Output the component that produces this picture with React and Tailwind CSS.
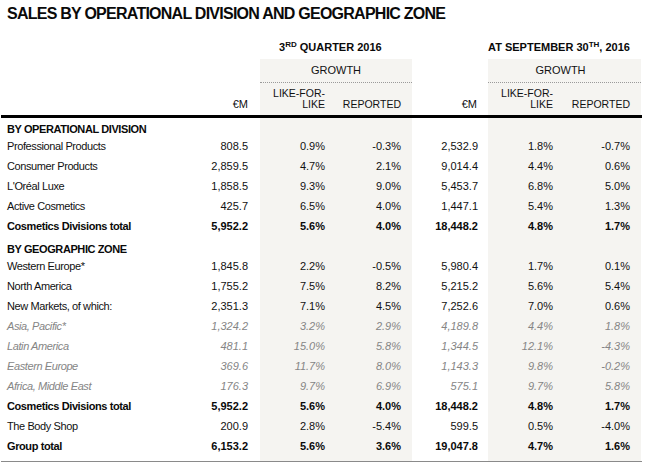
import React from "react";

const SH = "bg-[#f5f4f1]";

const rows = [
  { type: "section", label: "BY OPERATIONAL DIVISION", h: "h-[18px]" },
  { label: "Professional Products", v: ["808.5", "0.9%", "-0.3%", "2,532.9", "1.8%", "-0.7%"] },
  { label: "Consumer Products", v: ["2,859.5", "4.7%", "2.1%", "9,014.4", "4.4%", "0.6%"] },
  { label: "L'Oréal Luxe", v: ["1,858.5", "9.3%", "9.0%", "5,453.7", "6.8%", "5.0%"] },
  { label: "Active Cosmetics", v: ["425.7", "6.5%", "4.0%", "1,447.1", "5.4%", "1.3%"] },
  { label: "Cosmetics Divisions total", style: "bold", v: ["5,952.2", "5.6%", "4.0%", "18,448.2", "4.8%", "1.7%"] },
  { type: "section", label: "BY GEOGRAPHIC ZONE", h: "h-[20px]" },
  { label: "Western Europe*", v: ["1,845.8", "2.2%", "-0.5%", "5,980.4", "1.7%", "0.1%"] },
  { label: "North America", v: ["1,755.2", "7.5%", "8.2%", "5,215.2", "5.6%", "5.4%"] },
  { label: "New Markets, of which:", v: ["2,351.3", "7.1%", "4.5%", "7,252.6", "7.0%", "0.6%"] },
  { label: "Asia, Pacific*", style: "italic", v: ["1,324.2", "3.2%", "2.9%", "4,189.8", "4.4%", "1.8%"] },
  { label: "Latin America", style: "italic", v: ["481.1", "15.0%", "5.8%", "1,344.5", "12.1%", "-4.3%"] },
  { label: "Eastern Europe", style: "italic", v: ["369.6", "11.7%", "8.0%", "1,143.3", "9.8%", "-0.2%"] },
  { label: "Africa, Middle East", style: "italic", v: ["176.3", "9.7%", "6.9%", "575.1", "9.7%", "5.8%"] },
  { label: "Cosmetics Divisions total", style: "bold", v: ["5,952.2", "5.6%", "4.0%", "18,448.2", "4.8%", "1.7%"] },
  { label: "The Body Shop", v: ["200.9", "2.8%", "-5.4%", "599.5", "0.5%", "-4.0%"] },
  { label: "Group total", style: "bold", last: true, v: ["6,153.2", "5.6%", "3.6%", "19,047.8", "4.7%", "1.6%"] },
];

const GRID = "grid grid-cols-[183px_76px_76px_76px_76px_76px_77px]";
const shaded = [false, true, true, false, true, true];
const pads = ["pr-[12px]", "pr-[11px]", "pr-[11px]", "pr-[10px]", "pr-[11px]", "pr-[11px]"];

function Row({ r }) {
  if (r.type === "section") {
    return (
      <div className={`${GRID} ${r.h}`}>
        <div className="flex items-end pl-[6px] font-bold text-[11px] leading-[14px] tracking-[-0.4px] text-[#0a0a0a] whitespace-nowrap">
          {r.label}
        </div>
        {shaded.map((s, i) => (
          <div key={i} className={s ? SH : ""} />
        ))}
      </div>
    );
  }
  const cls =
    r.style === "bold"
      ? "font-bold text-[#0a0a0a]"
      : r.style === "italic"
      ? "italic text-[#858585]"
      : "text-[#111]";
  return (
    <div
      className={`${GRID} ${r.last ? "h-[26px] border-b border-[#8a8a8a]" : "h-[20px]"} ${cls} text-[11px] leading-[14px]`}
    >
      <div className={`flex items-center pl-[6px] tracking-[-0.4px] whitespace-nowrap ${r.last ? "pb-[6px]" : ""}`}>
        {r.label}
      </div>
      {r.v.map((v, i) => (
        <div
          key={i}
          className={`flex items-center justify-end ${pads[i]} ${shaded[i] ? SH : ""} ${r.last ? "pb-[6px]" : ""}`}
        >
          {v}
        </div>
      ))}
    </div>
  );
}

export default function App() {
  return (
    <div
      className="w-[650px] h-[465px] bg-white overflow-hidden"
      style={{ fontFamily: "'Liberation Sans', Arial, Helvetica, sans-serif" }}
    >
      <div className="h-[38px] pl-[7px] pt-[5px]">
        <h1 className="text-[16px] leading-[18px] font-bold tracking-[-0.75px] text-[#0a0a0a] whitespace-nowrap">
          SALES BY OPERATIONAL DIVISION AND GEOGRAPHIC ZONE
        </h1>
      </div>
      <div className="ml-[1px] w-[641px]">
        {/* header row A */}
        <div className={`${GRID} h-[21px] text-[11px] font-bold text-[#0a0a0a] leading-[14px]`}>
          <div />
          <div />
          <div className="col-span-2 pl-[19px] pt-[2px] whitespace-nowrap">
            3<sup className="text-[8px]">RD</sup> QUARTER 2016
          </div>
          <div />
          <div className="col-span-2 pl-[0px] pt-[2px] whitespace-nowrap">
            AT SEPTEMBER 30<sup className="text-[8px]">TH</sup>, 2016
          </div>
        </div>
        {/* header row B */}
        <div className={`${GRID} h-[24px] text-[11px] text-[#111]`}>
          <div />
          <div />
          <div className={`col-span-2 ${SH} flex items-center justify-center border-b border-dotted border-[#9a9a9a] pb-[1px]`}>
            GROWTH
          </div>
          <div />
          <div className={`col-span-2 ${SH} flex items-center justify-center border-b border-dotted border-[#9a9a9a] pb-[1px] pr-[8px]`}>
            GROWTH
          </div>
        </div>
        {/* header row C */}
        <div className={`${GRID} h-[35px] border-b-[3px] border-black text-[10.5px] leading-[11px] text-[#111]`}>
          <div />
          <div className="flex items-end justify-end pr-[12px] pb-[5px] text-[11px]">€M</div>
          <div className={`${SH} flex items-end justify-end pr-[11px] pb-[5px] text-right`}>
            LIKE-FOR-
            <br />
            LIKE
          </div>
          <div className={`${SH} flex items-end justify-end pr-[11px] pb-[5px]`}>REPORTED</div>
          <div className="flex items-end justify-end pr-[11px] pb-[5px] text-[11px]">€M</div>
          <div className={`${SH} flex items-end justify-end pr-[11px] pb-[5px] text-right`}>
            LIKE-FOR-
            <br />
            LIKE
          </div>
          <div className={`${SH} flex items-end justify-end pr-[11px] pb-[5px]`}>REPORTED</div>
        </div>
        {rows.map((r, i) => (
          <Row key={i} r={r} />
        ))}
      </div>
    </div>
  );
}
